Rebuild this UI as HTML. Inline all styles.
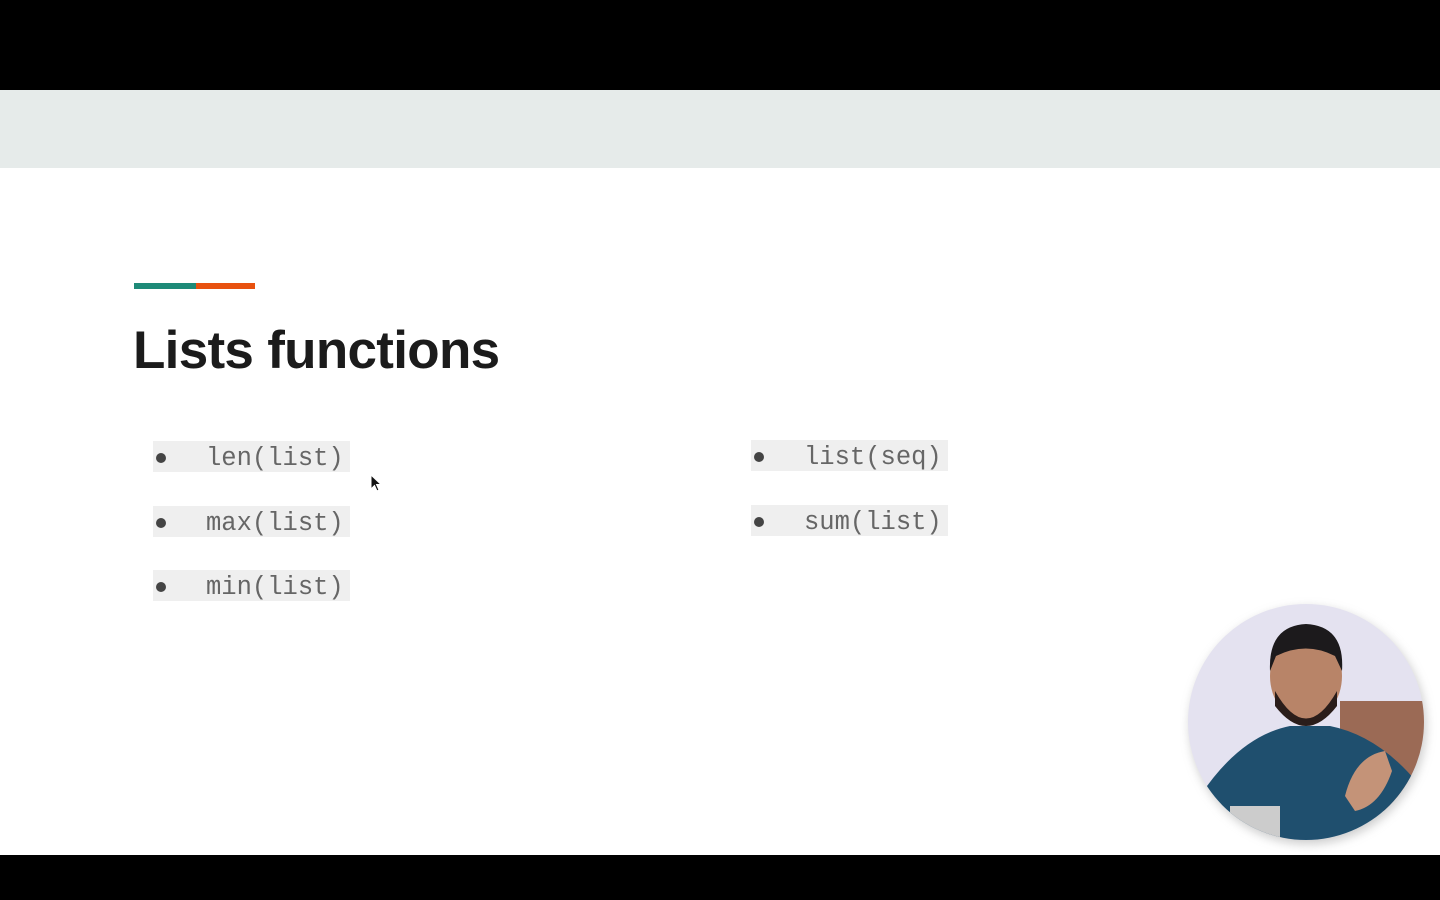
<!DOCTYPE html>
<html><head><style>
html,body{margin:0;padding:0;width:1440px;height:900px;overflow:hidden;background:#000;position:relative;font-family:"Liberation Sans",sans-serif}
.slide{position:absolute;left:0;top:90px;width:1440px;height:765px;background:#fff}
.band{position:absolute;left:0;top:0;width:1440px;height:78px;background:#e6ebea}
.bar1{position:absolute;left:134px;top:193px;width:62px;height:6px;background:#1e8a78}
.bar2{position:absolute;left:196px;top:193px;width:59px;height:6px;background:#e8510f}
h1{position:absolute;left:133px;top:229px;margin:0;font-size:53px;font-weight:bold;color:#1b1b1b;letter-spacing:-0.7px;line-height:64px}
.code{position:absolute;width:197px;height:31px;background:#efefef;font-family:"Liberation Mono",monospace;font-size:25.5px;color:#666;line-height:35px}
.code .b{position:absolute;left:3px;top:12px;width:10px;height:10px;border-radius:50%;background:#444}
.code span{position:absolute;left:53px;top:0}
</style></head><body>
<div class="slide">
<div class="band"></div>
<div class="bar1"></div><div class="bar2"></div>
<h1>Lists functions</h1>
<div class="code" style="left:153px;top:351px"><div class="b"></div><span>len(list)</span></div>
<div class="code" style="left:153px;top:416px"><div class="b"></div><span>max(list)</span></div>
<div class="code" style="left:153px;top:480px"><div class="b"></div><span>min(list)</span></div>
<div class="code" style="left:751px;top:350px"><div class="b"></div><span>list(seq)</span></div>
<div class="code" style="left:751px;top:415px"><div class="b"></div><span>sum(list)</span></div>
<svg style="position:absolute;left:370px;top:384px" width="14" height="20" viewBox="0 0 14 20"><path d="M1 1 L1 15 L4.5 11.5 L7 17 L9 16 L6.5 10.5 L11 10.5 Z" fill="#111" stroke="#fff" stroke-width="1"/></svg>
</div>
<svg style="position:absolute;left:1180px;top:596px" width="260" height="260" viewBox="0 0 260 260">
<defs><clipPath id="c"><circle cx="126" cy="126" r="118"/></clipPath>
<filter id="s"><feGaussianBlur stdDeviation="5"/></filter></defs>
<circle cx="128" cy="130" r="118" fill="#999" opacity="0.5" filter="url(#s)"/>
<g clip-path="url(#c)">
<rect width="260" height="260" fill="#e4e2f0"/>
<rect x="160" y="105" width="100" height="110" fill="#9b6a55"/>
<path d="M20 200 Q60 140 110 130 L150 130 Q200 140 240 190 L240 260 L20 260 Z" fill="#1f4f6e"/>
<rect x="50" y="210" width="50" height="50" fill="#ccc"/>
<ellipse cx="126" cy="80" rx="36" ry="45" fill="#b88468"/>
<path d="M90 75 Q88 30 126 28 Q165 30 162 75 L155 60 Q126 45 96 60 Z" fill="#1c1a1c"/>
<path d="M95 95 Q126 150 157 95 L157 110 Q126 150 95 110 Z" fill="#2a1d1a"/>
<path d="M165 200 Q175 160 205 155 L212 175 Q200 210 175 215 Z" fill="#c49378"/>
</g>
</svg>
</body></html>
